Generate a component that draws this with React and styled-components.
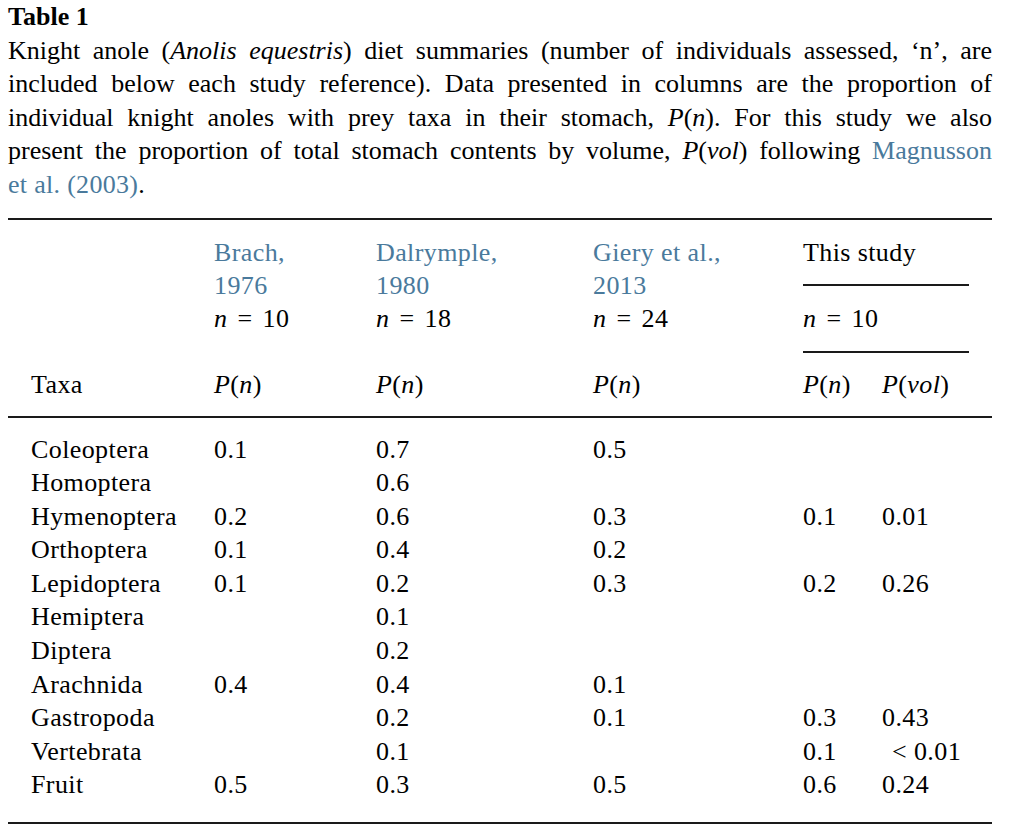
import React from 'react'
import styled, { createGlobalStyle } from 'styled-components'

const GlobalStyle = createGlobalStyle`
    body {
        margin: 0;
        background: #ffffff;
        color: #000000;
        font-family: "Liberation Serif", "Times New Roman", serif;
    }
`

const LINE = 33.6
const HEAD_LINE = 33.2

const studies = [
    { ref: 'Brach,', year: '1976', n: 10 },
    { ref: 'Dalrymple,', year: '1980', n: 18 },
    { ref: 'Giery et al.,', year: '2013', n: 24 },
]

const rows = [
    ['Coleoptera', '0.1', '0.7', '0.5', '', ''],
    ['Homoptera', '', '0.6', '', '', ''],
    ['Hymenoptera', '0.2', '0.6', '0.3', '0.1', '0.01'],
    ['Orthoptera', '0.1', '0.4', '0.2', '', ''],
    ['Lepidoptera', '0.1', '0.2', '0.3', '0.2', '0.26'],
    ['Hemiptera', '', '0.1', '', '', ''],
    ['Diptera', '', '0.2', '', '', ''],
    ['Arachnida', '0.4', '0.4', '0.1', '', ''],
    ['Gastropoda', '', '0.2', '0.1', '0.3', '0.43'],
    ['Vertebrata', '', '0.1', '', '0.1', '< 0.01'],
    ['Fruit', '0.5', '0.3', '0.5', '0.6', '0.24'],
]

const Pn = () => (
    <>
        <i>P</i>(<i>n</i>)
    </>
)

const NEq = ({ n }) => (
    <>
        <i>n</i>
        <Eq>=</Eq>
        {n}
    </>
)

const App = () => {
    return (
        <Page>
            <GlobalStyle />
            <Title>Table 1</Title>
            <Caption>
                <Line>
                    Knight anole (<i>Anolis equestris</i>) diet summaries (number of individuals assessed, ‘n’, are
                </Line>
                <Line>
                    included below each study reference). Data presented in columns are the proportion of
                </Line>
                <Line>
                    individual knight anoles with prey taxa in their stomach, <Pn />. For this study we also
                </Line>
                <Line>
                    present the proportion of total stomach contents by volume, <i>P</i>(<i>vol</i>) following <Link>Magnusson</Link>
                </Line>
                <LastLine>
                    <Link>et al. (2003)</Link>.
                </LastLine>
            </Caption>

            <Table>
                <colgroup>
                    <col style={{ width: 206 }} />
                    <col style={{ width: 162 }} />
                    <col style={{ width: 217 }} />
                    <col style={{ width: 210 }} />
                    <col style={{ width: 79 }} />
                    <col />
                </colgroup>
                <thead>
                    <tr>
                        <HeadCell />
                        {studies.map(s => (
                            <HeadCell key={s.year}>
                                <Stacked><Link>{s.ref}</Link></Stacked>
                                <Stacked><Link>{s.year}</Link></Stacked>
                                <Stacked><NEq n={s.n} /></Stacked>
                                <Stacked />
                            </HeadCell>
                        ))}
                        <HeadCell colSpan={2}>
                            <Stacked>This study</Stacked>
                            <RuleSlot><Rule /></RuleSlot>
                            <Stacked><NEq n={10} /></Stacked>
                            <RuleSlot><Rule /></RuleSlot>
                        </HeadCell>
                    </tr>
                    <LabelRow>
                        <Cell $first>Taxa</Cell>
                        <Cell><Pn /></Cell>
                        <Cell><Pn /></Cell>
                        <Cell><Pn /></Cell>
                        <Cell><Pn /></Cell>
                        <Cell><i>P</i>(<i>vol</i>)</Cell>
                    </LabelRow>
                </thead>
                <Body>
                    {rows.map(r => (
                        <tr key={r[0]}>
                            {r.map((v, i) => (
                                <Cell key={i} $first={i === 0} $indent={v.startsWith('<')}>
                                    {v}
                                </Cell>
                            ))}
                        </tr>
                    ))}
                </Body>
            </Table>
        </Page>
    )
}

export default App

const Page = styled.div`
    width: 984px;
    padding: 0 8px;
    font-size: 26px;
    line-height: ${LINE}px;
`

const Title = styled.div`
    font-weight: bold;
`

const Caption = styled.div`
    margin-bottom: 16px;
`

const Line = styled.div`
    text-align: justify;
    text-align-last: justify;
    white-space: nowrap;
`

const LastLine = styled.div`
    letter-spacing: 0.3px;
`

const Link = styled.span`
    color: #4a7a9c;
`

const Eq = styled.span`
    margin: 0 10px;
`

const Table = styled.table`
    width: 984px;
    table-layout: fixed;
    border-collapse: collapse;
    border-top: 2px solid #1a1a1a;
    border-bottom: 2px solid #1a1a1a;
    letter-spacing: 0.4px;
`

const HeadCell = styled.th`
    font-weight: normal;
    text-align: left;
    vertical-align: top;
    padding: 16px 0 0 0;
    white-space: nowrap;
    line-height: ${HEAD_LINE}px;
`

const Stacked = styled.div`
    height: ${HEAD_LINE}px;
`

const RuleSlot = styled.div`
    height: ${HEAD_LINE}px;
    display: flex;
    align-items: center;
`

const Rule = styled.div`
    width: 166px;
    border-top: 2px solid #1a1a1a;
`

const LabelRow = styled.tr`
    border-bottom: 2px solid #1a1a1a;

    & > td {
        line-height: ${HEAD_LINE}px;
        padding-bottom: 14px;
    }
`

const Body = styled.tbody`
    & > tr:first-child > td {
        padding-top: 15px;
    }

    & > tr:last-child > td {
        padding-bottom: 20px;
    }
`

const Cell = styled.td`
    padding: 0 0 0 ${p => (p.$first ? 23 : p.$indent ? 10 : 0)}px;
    white-space: nowrap;
    vertical-align: top;
`
